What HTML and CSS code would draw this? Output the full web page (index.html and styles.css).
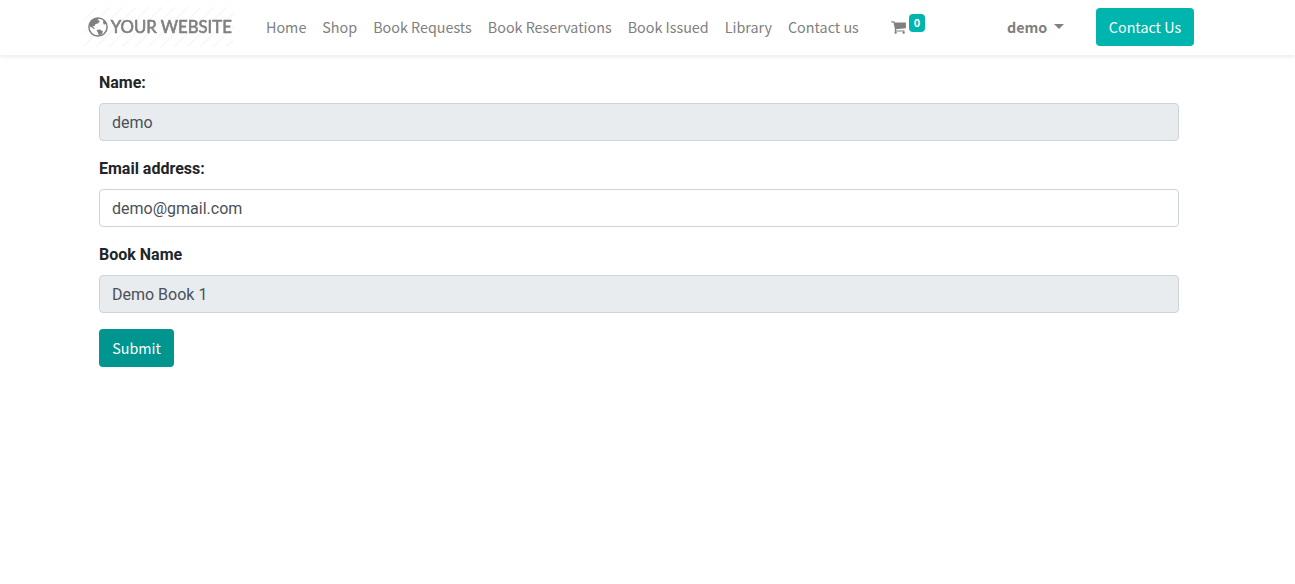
FILE: index.html
```html
<!DOCTYPE html>
<html lang="en">
<head>
<meta charset="utf-8">
<title>Book Request</title>
<link rel="stylesheet" href="styles.css">
</head>
<body>
<header class="header">
  <a class="logo">
    <svg width="150" height="40" viewBox="0 0 150 40">
      <defs>
        <pattern id="stripes" width="13" height="13" patternUnits="userSpaceOnUse">
          <path d="M-2 15L15 -2M-2 2L2 -2M11 15L15 11" stroke="#f5f5f5" stroke-width="1.2"/>
        </pattern>
      </defs>
      <rect width="150" height="40" fill="url(#stripes)"/>
      <g class="logo-mark">
        <circle cx="14" cy="20" r="9.1" fill="#fff" stroke="#808080" stroke-width="1.5"/>
        <path d="M5.500 17L8 13L12 11L15.500 11.500L13.500 13L16 14L14 16.500L11.500 17L10.500 19L8.500 19.500L11 21.500L10 22L7 20L5.500 19.500Z M12.500 23L16 22.500L19 24.500L18 27L15 28.500L14 26Z M19.500 13L21 14.500L22.500 17.500L21 17L20 18L19 15.500Z" fill="#808080"/>
        <text class="logo-text" x="26.800" y="26" textLength="121" lengthAdjust="spacingAndGlyphs">YOUR WEBSITE</text>
      </g>
    </svg>
  </a>
  <nav class="nav">
    <a class="nav-link">Home</a>
    <a class="nav-link">Shop</a>
    <a class="nav-link">Book Requests</a>
    <a class="nav-link">Book Reservations</a>
    <a class="nav-link">Book Issued</a>
    <a class="nav-link">Library</a>
    <a class="nav-link">Contact us</a>
  </nav>
  <a class="cart">
    <svg width="15" height="16" viewBox="0 0 1664 1792" fill="#808080"><path d="M640 1536q0 52-38 90t-90 38-90-38-38-90 38-90 90-38 90 38 38 90zm896 0q0 52-38 90t-90 38-90-38-38-90 38-90 90-38 90 38 38 90zm128-1088v512q0 24-16.500 42.500t-40.500 21.500l-1044 122q13 60 13 70 0 16-24 64h920q26 0 45 19t19 45-19 45-45 19h-1024q-26 0-45-19t-19-45q0-11 8-31.500t16-36 21.500-40 15.500-29.500l-177-823h-204q-26 0-45-19t-19-45 19-45 45-19h256q16 0 28.500 6.500t19.500 15.500 13 24.500 8 26 5.500 29.500 4.500 26h1201q26 0 45 19t19 45z"/></svg>
    <span class="badge">0</span>
  </a>
  <a class="user">demo<span class="caret"></span></a>
  <a class="btn contact">Contact Us</a>
</header>
<main class="form">
  <label class="label" for="name">Name:</label>
  <input class="input" id="name" value="demo" readonly>
  <label class="label" for="email">Email address:</label>
  <input class="input" id="email" value="demo@gmail.com">
  <label class="label" for="book">Book Name</label>
  <input class="input" id="book" value="Demo Book 1" readonly>
  <button class="btn submit" type="button">Submit</button>
</main>
</body>
</html>
```
FILE: styles.css
```css
* { box-sizing: border-box; }
body {
  margin: 0;
  background: #fff;
  color: #212529;
  font: 16px/24px Roboto, sans-serif;
}
.header {
  display: flex;
  align-items: center;
  height: 55px;
  padding: 0 0 1px 84px;
  color: #808080;
  font-family: "Noto Sans CJK SC", sans-serif;
  font-size: 14.33px;
  box-shadow: 0 2px 4px rgba(0, 0, 0, .075);
}
.logo { display: flex; width: 150px; }
.logo svg { overflow: visible; }
.logo-mark { filter: blur(.35px); }
.logo-text {
  font: 16.5px/24px Lato, sans-serif;
  fill: #808080;
  stroke: #808080;
  stroke-width: .6px;
}
.nav { display: flex; width: 601px; margin-left: 24px; }
.nav-link { padding: 0 8px; white-space: nowrap; }
.cart { display: flex; width: 34px; margin-left: 32px; align-items: center; }
.cart svg { flex: none; }
.badge {
  width: 16px;
  height: 18px;
  margin: -8px 0 0 3px;
  border-radius: 4px;
  background: #00b5ad;
  color: #fff;
  font-size: 11px;
  font-weight: bold;
  line-height: 17px;
  text-align: center;
}
.user { display: flex; width: 89px; margin-left: 82px; font-weight: bold; }
.caret {
  height: 5px;
  margin: 9px 0 0 7px;
  border: 5px solid transparent;
  border-top-color: #808080;
  border-bottom: 0;
}
.btn {
  height: 38px;
  padding: 0;
  border: 0;
  border-radius: 4px;
  color: #fff;
  font: 14.3px/38px "Noto Sans CJK SC", sans-serif;
  text-align: center;
}
.contact { width: 98px; background: #00b5ad; }
.form { display: flex; flex-direction: column; width: 1080px; margin: 16px 0 0 99px; }
.label { margin-bottom: 8px; font-weight: bold; }
.input {
  width: 100%;
  height: 38px;
  margin-bottom: 16px;
  padding: 6px 12px;
  border: 1px solid #ced4da;
  border-radius: 4px;
  background: #fff;
  color: #495057;
  font: 16px/24px Roboto, sans-serif;
}
.input:read-only { background: #e9ecef; }
.submit { width: 75px; background: #00968f; }
```
